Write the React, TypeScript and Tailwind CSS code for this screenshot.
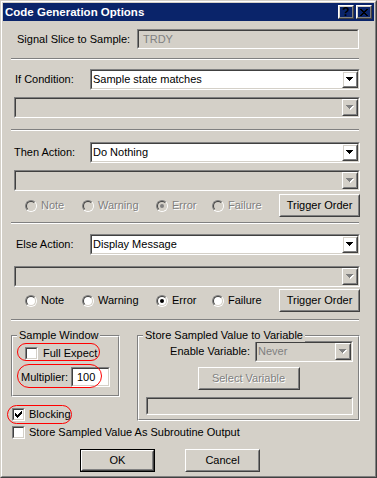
import React from 'react';

type Kids = { className?: string; children?: React.ReactNode };

// classic 3d borders
const Sunken: React.FC<Kids & { inner?: string }> = ({ className = '', inner = 'bg-white', children }) => (
  <div className={`border border-t-[#808080] border-l-[#808080] border-r-white border-b-white ${className}`}>
    <div className={`h-full w-full border border-t-[#404040] border-l-[#404040] border-r-[#d4d0c8] border-b-[#d4d0c8] ${inner}`}>
      {children}
    </div>
  </div>
);

const Raised: React.FC<Kids> = ({ className = '', children }) => (
  <div className={`border border-t-white border-l-white border-r-[#404040] border-b-[#404040] ${className}`}>
    <div className="flex h-full w-full items-center justify-center border border-t-[#d4d0c8] border-l-[#d4d0c8] border-r-[#808080] border-b-[#808080]">
      {children}
    </div>
  </div>
);

const Arrow: React.FC<{ disabled?: boolean }> = ({ disabled }) => {
  const rows = (dx: number, dy: number) => (
    <>
      <rect x={0 + dx} y={0 + dy} width="7" height="1" />
      <rect x={1 + dx} y={1 + dy} width="5" height="1" />
      <rect x={2 + dx} y={2 + dy} width="3" height="1" />
      <rect x={3 + dx} y={3 + dy} width="1" height="1" />
    </>
  );
  return (
    <svg width="8" height="5" viewBox="0 0 8 5" shapeRendering="crispEdges">
      {disabled && <g fill="#ffffff">{rows(1, 1)}</g>}
      <g fill={disabled ? '#808080' : '#000000'}>{rows(0, 0)}</g>
    </svg>
  );
};

const Combo: React.FC<{ value?: string; disabled?: boolean; className?: string }> = ({ value, disabled, className = '' }) => (
  <Sunken className={`h-[21px] ${className}`} inner={disabled ? 'bg-[#d4d0c8]' : 'bg-white'}>
    <div className="flex h-full items-center">
      <span className={`flex-1 pl-[1px] ${disabled ? 'text-[#808080]' : 'text-black'}`}>{value}</span>
      <Raised className="h-full w-[16px]">
        <Arrow disabled={disabled} />
      </Raised>
    </div>
  </Sunken>
);

const Check: React.FC<{ checked?: boolean }> = ({ checked }) => (
  <Sunken className="h-[13px] w-[13px] shrink-0">
    {checked && (
      <svg width="7" height="7" viewBox="0 0 7 7" shapeRendering="crispEdges" className="ml-[1px] mt-[1px] block">
        {[2, 3, 4, 3, 2, 1, 0].map((y, x) => (
          <rect key={x} x={x} y={y} width="1" height="3" fill="#000" />
        ))}
      </svg>
    )}
  </Sunken>
);

const Radio: React.FC<{ label: string; checked?: boolean; disabled?: boolean; className?: string }> = ({ label, checked, disabled, className = '' }) => (
  <div className={`flex items-center gap-[4px] ${className}`}>
    <span className="block h-[12px] w-[12px] shrink-0 rounded-full border border-t-[#808080] border-l-[#808080] border-r-white border-b-white">
      <span
        className={`flex h-full w-full items-center justify-center rounded-full border border-t-[#404040] border-l-[#404040] border-r-[#d4d0c8] border-b-[#d4d0c8] ${
          disabled ? 'bg-[#d4d0c8]' : 'bg-white'
        }`}
      >
        {checked && <span className={`block h-[4px] w-[4px] rounded-full ${disabled ? 'bg-[#808080]' : 'bg-black'}`} />}
      </span>
    </span>
    <span className={disabled ? 'text-[#808080] [text-shadow:1px_1px_0_#ffffff]' : ''}>{label}</span>
  </div>
);

const RadioRow: React.FC<{ disabled?: boolean; className?: string }> = ({ disabled, className = '' }) => (
  <div className={`flex h-[23px] items-center ${className}`}>
    <div className="flex flex-1 items-center pl-[14px]">
      <Radio label="Note" disabled={disabled} className="w-[57px]" />
      <Radio label="Warning" disabled={disabled} className="w-[74px]" />
      <Radio label="Error" checked disabled={disabled} className="w-[56px]" />
      <Radio label="Failure" disabled={disabled} />
    </div>
    <Raised className="h-full w-[81px]">Trigger Order</Raised>
  </div>
);

const Sep: React.FC<{ className?: string }> = ({ className = '' }) => (
  <div className={`mr-[1px] border-t border-b border-t-[#808080] border-b-white ${className}`} />
);

const Group: React.FC<Kids & { title: string }> = ({ title, className = '', children }) => (
  <div className={`relative border border-t-[#808080] border-l-[#808080] border-r-white border-b-white ${className}`}>
    <div className="flex h-full flex-col border border-t-white border-l-white border-r-[#808080] border-b-[#808080]">
      {children}
    </div>
    <span className="absolute -top-[7px] left-[5px] bg-[#d4d0c8] px-[2px] leading-[13px]">{title}</span>
  </div>
);

const Ring: React.FC<{ className: string }> = ({ className }) => (
  <span className={`pointer-events-none absolute rounded-full border border-[#ff0000] ${className}`} />
);

export default function App() {
  return (
    <div className="h-[478px] w-[377px] bg-[#d4d0c8] font-['Liberation_Sans',Arial,sans-serif] text-[11px] leading-[13px] text-black">
      <div className="h-full border border-t-[#d4d0c8] border-l-[#d4d0c8] border-r-[#404040] border-b-[#404040]">
        <div className="h-full border border-t-white border-l-white border-r-[#808080] border-b-[#808080] p-[1px]">
          {/* Title bar */}
          <div className="flex h-[18px] items-center bg-[#0a246a] px-[2px]">
            <span className="flex-1 text-[11.5px] font-bold text-white">Code Generation Options</span>
            <Raised className="h-[14px] w-[16px]">
              <span className="text-[12px] font-bold leading-[12px] text-black">?</span>
            </Raised>
            <Raised className="ml-[2px] h-[14px] w-[16px]">
              <svg width="8" height="7" viewBox="0 0 8 7" shapeRendering="crispEdges">
                {[0, 1, 2, 3, 4, 5, 6].map((i) => (
                  <g key={i} fill="#000">
                    <rect x={i} y={i} width="2" height="1" />
                    <rect x={6 - i} y={i} width="2" height="1" />
                  </g>
                ))}
              </svg>
            </Raised>
          </div>

          <div className="flex flex-col pl-[8px] pr-[14px]">
            <div className="mt-[8px] flex h-[20px] items-center">
              <span className="w-[126px] pl-[6px]">Signal Slice to Sample:</span>
              <Sunken className="mr-[1px] h-full flex-1" inner="flex items-center bg-[#d4d0c8] pl-[4px] text-[#808080]">
                TRDY
              </Sunken>
            </div>

            <Sep className="mt-[9px]" />

            <div className="mt-[9px] flex items-center">
              <span className="w-[79px] pl-[4px]">If Condition:</span>
              <Combo value="Sample state matches" className="flex-1" />
            </div>
            <Combo disabled className="ml-[3px] mt-[7px]" />

            <Sep className="mt-[11px]" />

            <div className="mt-[11px] flex items-center">
              <span className="w-[79px] pl-[3px]">Then Action:</span>
              <Combo value="Do Nothing" className="flex-1" />
            </div>
            <Combo disabled className="ml-[3px] mt-[7px]" />
            <RadioRow disabled className="mt-[3px]" />

            <Sep className="mt-[5px]" />

            <div className="mt-[10px] flex items-center">
              <span className="w-[79px] pl-[5px]">Else Action:</span>
              <Combo value="Display Message" className="flex-1" />
            </div>
            <Combo disabled className="ml-[3px] mt-[11px]" />
            <RadioRow className="mt-[2px]" />

            <Sep className="mt-[7px]" />

            <div className="mt-[14px] flex gap-[17px]">
              <div className="flex w-[109px] flex-col">
                <Group title="Sample Window" className="h-[62px]">
                  <div className="relative mt-[10px] flex items-center gap-[5px] pl-[12px]">
                    <Check />
                    <span>Full Expect</span>
                    <Ring className="-top-[4px] left-[4px] h-[18px] w-[83px]" />
                  </div>
                  <div className="relative mt-[7px] flex h-[20px] items-center pl-[8px]">
                    <span className="w-[50px]">Multiplier:</span>
                    <Sunken className="h-full w-[39px]" inner="flex items-center bg-white pl-[4px]">
                      100
                    </Sunken>
                    <Ring className="-top-[3px] left-[4px] h-[24px] w-[85px]" />
                  </div>
                </Group>
                <div className="relative mt-[11px] flex items-center gap-[4px] pl-[1px]">
                  <Check checked />
                  <span>Blocking</span>
                  <Ring className="-top-[3px] -left-[4px] h-[19px] w-[65px]" />
                </div>
              </div>

              <Group title="Store Sampled Value to Variable" className="h-[86px] flex-1">
                <div className="mt-[4px] flex items-center justify-end gap-[5px] pr-[5px]">
                  <span>Enable Variable:</span>
                  <Combo value="Never" disabled className="w-[98px]" />
                </div>
                <Raised className="mt-[5px] h-[23px] w-[102px] self-center">
                  <span className="text-[#808080] [text-shadow:1px_1px_0_#ffffff]">Select Variable</span>
                </Raised>
                <Sunken className="ml-[7px] mr-[5px] mt-[7px] h-[18px]" inner="bg-[#d4d0c8]" />
              </Group>
            </div>

            <div className="mt-[5px] flex items-center gap-[4px] pl-[1px]">
              <Check />
              <span>Store Sampled Value As Subroutine Output</span>
            </div>

            <div className="mt-[10px] flex gap-[30px] pl-[69px]">
              <div className="h-[23px] w-[75px] border border-black">
                <Raised className="h-full w-full">OK</Raised>
              </div>
              <Raised className="h-[23px] w-[75px]">Cancel</Raised>
            </div>
          </div>
        </div>
      </div>
    </div>
  );
}
